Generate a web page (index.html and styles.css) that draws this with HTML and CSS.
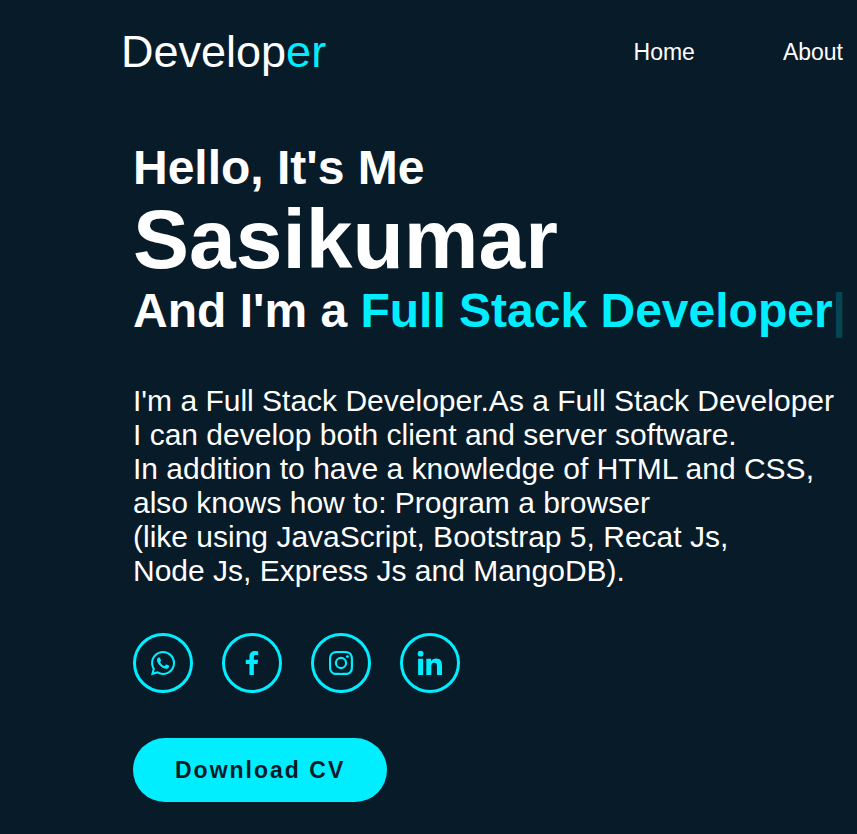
FILE: index.html
```html
<!DOCTYPE html>
<html lang="en">
<head>
<meta charset="utf-8">
<meta name="viewport" content="width=device-width, initial-scale=1">
<title>Developer</title>
<link rel="stylesheet" href="styles.css">
</head>
<body>
<header class="header">
  <a href="#home" class="logo">Develop<span class="accent">er</span></a>
  <nav class="nav">
    <a href="#home">Home</a>
    <a href="#about">About</a>
  </nav>
</header>
<main class="home" id="home">
  <h3 class="line">Hello, It's Me</h3>
  <h1 class="name">Sasikumar</h1>
  <h3 class="line">And I'm a <span class="accent">Full Stack Developer<span class="cursor">|</span></span></h3>
  <p class="intro">I'm a Full Stack Developer.As a Full Stack Developer<br>I can develop both client and server software.<br>In addition to have a knowledge of HTML and CSS,<br>also knows how to: Program a browser<br>(like using JavaScript, Bootstrap 5, Recat Js,<br>Node Js, Express Js and MangoDB).</p>
  <div class="social">
    <a href="#whatsapp" aria-label="WhatsApp"><svg viewBox="0 0 24 24"><path fill-rule="evenodd" d="M18.403 5.633A8.919 8.919 0 0 0 12.053 3c-4.948 0-8.976 4.027-8.978 8.977 0 1.582.413 3.126 1.198 4.488L3 21.116l4.759-1.249a8.981 8.981 0 0 0 4.29 1.093h.004c4.947 0 8.975-4.027 8.977-8.977a8.926 8.926 0 0 0-2.627-6.35m-6.35 13.812h-.003a7.446 7.446 0 0 1-3.798-1.041l-.272-.162-2.824.741.753-2.753-.177-.282a7.448 7.448 0 0 1-1.141-3.971c.002-4.114 3.349-7.461 7.465-7.461a7.413 7.413 0 0 1 5.275 2.188 7.42 7.42 0 0 1 2.183 5.279c-.002 4.114-3.349 7.462-7.461 7.462m4.093-5.589c-.225-.113-1.327-.655-1.533-.73-.205-.075-.354-.112-.504.112s-.58.729-.711.879-.262.168-.486.056-.947-.349-1.804-1.113c-.667-.595-1.117-1.329-1.248-1.554s-.014-.346.099-.458c.101-.1.224-.262.336-.393.112-.131.149-.224.224-.374s.038-.281-.019-.393c-.056-.113-.505-1.217-.692-1.666-.181-.435-.366-.377-.504-.383a9.65 9.65 0 0 0-.429-.008.826.826 0 0 0-.599.28c-.206.225-.785.767-.785 1.871s.804 2.171.916 2.321c.112.15 1.582 2.415 3.832 3.387.536.231.954.369 1.279.473.537.171 1.026.146 1.413.089.431-.064 1.327-.542 1.514-1.066.187-.524.187-.973.131-1.067-.056-.094-.207-.151-.43-.263"/></svg></a>
    <a href="#facebook" aria-label="Facebook"><svg viewBox="0 0 24 24"><path d="M13.397 20.997v-8.196h2.765l.411-3.209h-3.176V7.548c0-.926.258-1.56 1.587-1.56h1.684V3.127A22.336 22.336 0 0 0 14.201 3c-2.444 0-4.122 1.492-4.122 4.231v2.355H7.332v3.209h2.753v8.202h3.312z"/></svg></a>
    <a href="#instagram" aria-label="Instagram"><svg viewBox="0 0 24 24"><path d="M11.999 7.377a4.623 4.623 0 1 0 0 9.248 4.623 4.623 0 0 0 0-9.248zm0 7.627a3.004 3.004 0 1 1 0-6.008 3.004 3.004 0 0 1 0 6.008z"/><circle cx="16.806" cy="7.207" r="1.078"/><path fill-rule="evenodd" d="M20.533 6.111A4.605 4.605 0 0 0 17.9 3.479a6.606 6.606 0 0 0-2.186-.42c-.963-.042-1.268-.054-3.71-.054s-2.755 0-3.71.054a6.554 6.554 0 0 0-2.184.42 4.6 4.6 0 0 0-2.633 2.632 6.585 6.585 0 0 0-.419 2.186c-.043.962-.056 1.267-.056 3.71 0 2.442 0 2.753.056 3.71.015.748.156 1.486.419 2.187a4.61 4.61 0 0 0 2.634 2.632 6.584 6.584 0 0 0 2.185.45c.963.042 1.268.055 3.71.055s2.755 0 3.71-.055a6.615 6.615 0 0 0 2.186-.419 4.613 4.613 0 0 0 2.633-2.633c.263-.7.404-1.438.419-2.186.043-.962.056-1.267.056-3.71s0-2.753-.056-3.71a6.581 6.581 0 0 0-.421-2.217zm-1.218 9.532a5.043 5.043 0 0 1-.311 1.688 2.987 2.987 0 0 1-1.712 1.711 4.985 4.985 0 0 1-1.67.311c-.95.044-1.218.055-3.654.055-2.438 0-2.687 0-3.655-.055a4.96 4.96 0 0 1-1.669-.311 2.985 2.985 0 0 1-1.719-1.711 5.08 5.08 0 0 1-.311-1.669c-.043-.95-.053-1.218-.053-3.654 0-2.437 0-2.686.053-3.655a5.038 5.038 0 0 1 .311-1.687c.305-.789.93-1.41 1.719-1.712a5.01 5.01 0 0 1 1.669-.311c.951-.043 1.218-.055 3.655-.055s2.687 0 3.654.055a4.96 4.96 0 0 1 1.67.311 2.991 2.991 0 0 1 1.712 1.712 5.08 5.08 0 0 1 .311 1.669c.043.951.055 1.218.055 3.655 0 2.436 0 2.698-.043 3.654h-.011z"/></svg></a>
    <a href="#linkedin" aria-label="LinkedIn"><svg viewBox="0 0 24 24"><circle cx="4.983" cy="5.009" r="2.188"/><path d="M9.237 8.855v12.139h3.769v-6.003c0-1.584.298-3.118 2.262-3.118 1.937 0 1.961 1.811 1.961 3.218v5.904H21v-6.657c0-3.27-.704-5.783-4.526-5.783-1.835 0-3.065 1.007-3.568 1.96h-.051v-1.66H9.237zm-6.142 0H6.87v12.139H3.095z"/></svg></a>
  </div>
  <a href="#cv" class="btn">Download CV</a>
</main>
</body>
</html>
```
FILE: styles.css
```css
* {
  box-sizing: border-box;
  margin: 0;
  padding: 0;
}

body {
  background: #081b29;
  color: #fff;
  font-family: "Liberation Sans", Arial, sans-serif;
}

a {
  color: inherit;
  text-decoration: none;
}

.accent {
  color: #0ef;
}

.header {
  display: flex;
  align-items: center;
  justify-content: space-between;
  padding: 26px 14px 26px 121px;
}

.logo {
  font-size: 45px;
  line-height: 52px;
}

.nav {
  display: flex;
  gap: 88px;
  font-size: 23px;
}

.home {
  padding: 36px 0 32px 133px;
}

.line {
  font-size: 48px;
  line-height: 55px;
  white-space: nowrap;
}

.name {
  font-size: 84px;
  line-height: 88px;
}

.cursor {
  opacity: 0.2;
}

.intro {
  margin: 46px 0 45px;
  font-size: 30px;
  line-height: 34px;
  white-space: nowrap;
}

.social {
  display: flex;
  gap: 29px;
  margin-bottom: 45px;
}

.social a {
  display: flex;
  align-items: center;
  justify-content: center;
  width: 60px;
  height: 60px;
  border: 3px solid #0ef;
  border-radius: 50%;
  color: #0ef;
}

.social svg {
  width: 32px;
  height: 32px;
  fill: currentColor;
}

.btn {
  display: inline-block;
  padding: 0 42px;
  border-radius: 32px;
  background: #0ef;
  color: #081b29;
  font-size: 23px;
  font-weight: 600;
  letter-spacing: 2px;
  line-height: 64px;
}
```
